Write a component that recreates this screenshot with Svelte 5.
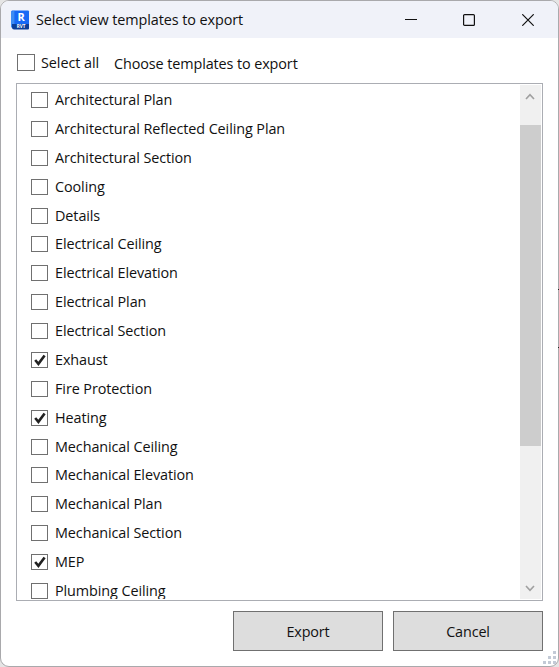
<script>
  let allSelected = $state(false);
  let items = $state([
    { name: 'Architectural Plan', checked: false },
    { name: 'Architectural Reflected Ceiling Plan', checked: false },
    { name: 'Architectural Section', checked: false },
    { name: 'Cooling', checked: false },
    { name: 'Details', checked: false },
    { name: 'Electrical Ceiling', checked: false },
    { name: 'Electrical Elevation', checked: false },
    { name: 'Electrical Plan', checked: false },
    { name: 'Electrical Section', checked: false },
    { name: 'Exhaust', checked: true },
    { name: 'Fire Protection', checked: false },
    { name: 'Heating', checked: true },
    { name: 'Mechanical Ceiling', checked: false },
    { name: 'Mechanical Elevation', checked: false },
    { name: 'Mechanical Plan', checked: false },
    { name: 'Mechanical Section', checked: false },
    { name: 'MEP', checked: true },
    { name: 'Plumbing Ceiling', checked: false }
  ]);
  const grip = [[10, 0], [5, 5], [10, 5], [0, 10], [5, 10], [10, 10]];

  function toggleAll() {
    allSelected = !allSelected;
    for (const item of items) item.checked = allSelected;
  }
</script>

<div class="desktop">
  <div class="window">
    <header>
      <svg class="logo" width="19" height="20" viewBox="0 0 19 20">
        <path d="M1 0.5H17Q18 0.5 18 1.5V14H0V1.5Z" fill="#1769f5" />
        <path d="M0 2L3.4 0.5V14L0 18Z" fill="#3d8cf3" />
        <path d="M1 14H18V18.5Q18 19.5 17 19.5H3Q1 19.5 1 17.5Z" fill="#0c3f98" />
        <text x="10.2" y="11.3" text-anchor="middle" font-size="11" font-weight="700" fill="#fff">R</text>
        <text x="10" y="18.4" text-anchor="middle" font-size="4.6" font-weight="700" fill="#fff">RVT</text>
      </svg>
      <span class="title">Select view templates to export</span>
      <div class="controls">
        <svg width="12" height="12"><path d="M0 5.5H12" /></svg>
        <svg width="12" height="12"><rect x=".6" y=".6" width="10.8" height="10.8" rx="1" /></svg>
        <svg width="12" height="12"><path d="M.3 .3L11.7 11.7M11.7 .3L.3 11.7" /></svg>
      </div>
    </header>

    <div class="top">
      <button class="check all" class:on={allSelected} onclick={toggleAll} aria-label="Select all"></button>
      <span class="select">Select all</span>
      <span class="hint">Choose templates to export</span>
    </div>

    <div class="list">
      <div class="rows">
        {#each items as item}
          <div class="row">
            <button class="check" onclick={() => (item.checked = !item.checked)} aria-label={item.name}>
              {#if item.checked}
                <svg width="15" height="14"><path d="M3.2 7L6.4 10.8L12.6 2.4" /></svg>
              {/if}
            </button>
            <span>{item.name}</span>
          </div>
        {/each}
      </div>
      <div class="scroll">
        <svg width="10" height="7"><path d="M1 6L5 1.6L9 6" /></svg>
        <div class="thumb"></div>
        <svg class="down" width="10" height="7"><path d="M1 1L5 5.4L9 1" /></svg>
      </div>
    </div>

    <footer>
      <button><span>Export</span></button>
      <button><span>Cancel</span></button>
    </footer>
    <svg class="grip" width="13" height="13">
      {#each grip as [x, y]}
        <rect {x} {y} width="3" height="3" />
      {/each}
    </svg>
  </div>
  <i class="tick" style="top: 289px"></i>
  <i class="tick" style="top: 347px"></i>
</div>

<style>
  :global(body) { margin: 0; overflow: hidden; }
  .desktop {
    position: relative;
    width: 559px;
    height: 667px;
    background: #e5e5e5;
    font: 14.4px/20px "Open Sans", "Noto Sans", sans-serif;
    color: #111;
    overflow: hidden;
  }
  .window {
    box-sizing: border-box;
    position: relative;
    width: 559px;
    height: 667px;
    border: 1px solid #a9a9ac;
    border-radius: 9px;
    background: #fff;
    overflow: hidden;
  }
  header {
    box-sizing: border-box;
    height: 37px;
    background: #f0f2f9;
    display: flex;
    align-items: center;
    padding: 0 24px 0 10px;
  }
  .title { margin-left: 6px; letter-spacing: -0.08px; }
  .controls { margin-left: auto; display: flex; gap: 47px; }
  .controls svg:first-child { margin-right: -1px; }
  .controls svg { fill: none; stroke: #111; stroke-width: 1.2; }
  .top { display: flex; align-items: flex-start; height: 45px; padding: 16px 0 0 16px; box-sizing: border-box; }
  .select { margin: -1px 0 0 6px; letter-spacing: -0.07px; }
  .hint { margin: 0 0 0 15px; letter-spacing: -0.1px; }
  .check {
    box-sizing: border-box;
    flex: none;
    width: 17px;
    height: 16px;
    padding: 0;
    border: 1px solid #707070;
    background: #fff;
    display: block;
  }
  .check.all { width: 18px; height: 17px; }
  .check.on { background: #222; }
  .check svg { display: block; fill: none; stroke: #212121; stroke-width: 2.6; }
  .list {
    box-sizing: border-box;
    width: 527px;
    height: 518px;
    margin-left: 15px;
    border: 1px solid #abadb3;
    display: flex;
    overflow: hidden;
    padding: 1px;
  }
  .rows { flex: 1; padding-left: 13px; overflow: hidden; }
  .row { height: 28.88px; display: flex; align-items: flex-start; padding-top: 7px; box-sizing: border-box; }
  .row span { margin: -2px 0 0 7px; white-space: nowrap; letter-spacing: -0.09px; }
  .scroll {
    width: 21px;
    background: #f0f0f0;
    display: flex;
    flex-direction: column;
    align-items: center;
    padding-top: 8px;
    box-sizing: border-box;
  }
  .scroll svg { flex: none; fill: none; stroke: #a0a0a0; stroke-width: 1.6; margin-right: 1px; }
  .thumb { width: 21px; height: 321px; margin-top: 25px; background: #cdcdcd; flex: none; }
  .scroll .down { margin: auto 1px 7px 0; }
  footer { display: flex; gap: 10px; justify-content: flex-end; padding: 10px 15px 0 0; }
  footer button {
    box-sizing: border-box;
    width: 150px;
    height: 40px;
    padding: 1px 0 0;
    border: 1px solid #707070;
    background: #ddd;
    font: inherit;
    letter-spacing: -0.15px;
    color: inherit;
  }
  .grip { position: absolute; right: 2px; bottom: 2px; fill: #c3cad6; }
  .tick { position: absolute; right: 0; width: 1px; height: 1px; background: #222; }
</style>
